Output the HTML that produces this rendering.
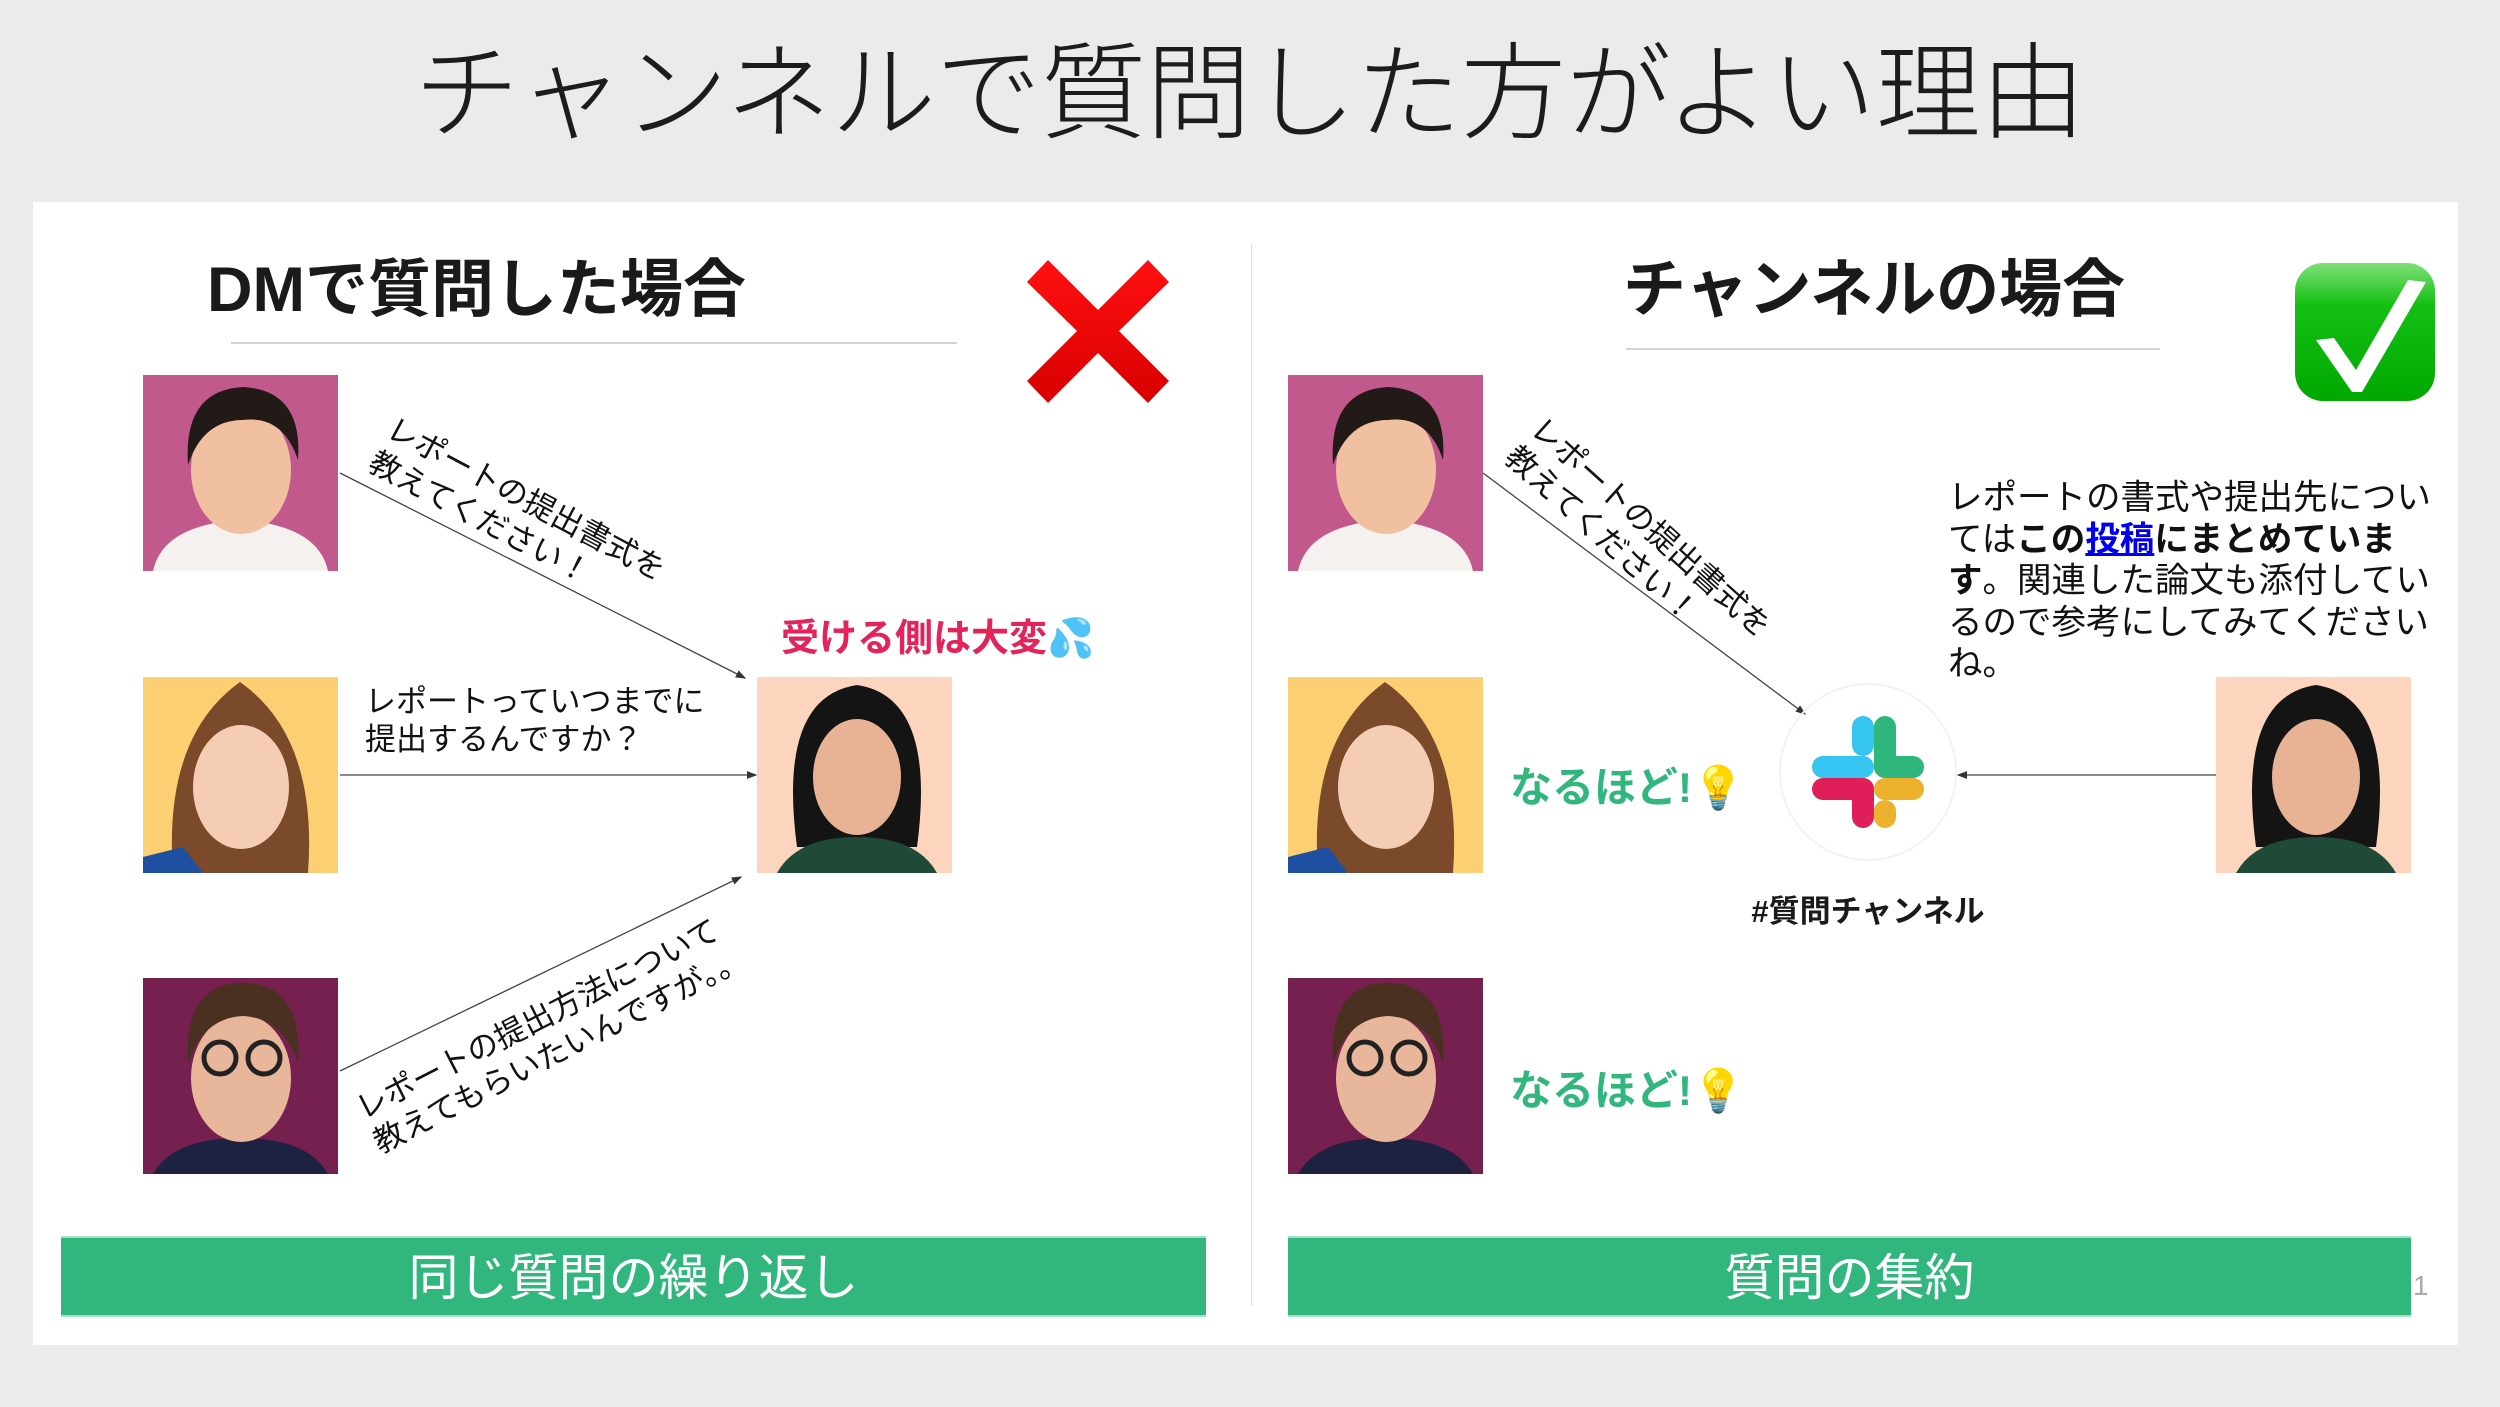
<!DOCTYPE html>
<html><head><meta charset="utf-8"><style>
*{margin:0;padding:0;box-sizing:border-box}
body{width:2500px;height:1407px;background:#ebebeb;position:relative;overflow:hidden;font-family:"Liberation Sans","Noto Sans CJK JP",sans-serif;color:#111}
.a{position:absolute;white-space:nowrap}
#panel{position:absolute;left:33px;top:202px;width:2425px;height:1143px;background:#fff}
.bar{position:absolute;top:1236px;height:81px;background:#31b77d;color:#fff;font-size:50px;line-height:81px;text-align:center;border-top:2px solid #a8e0c6;border-bottom:2px solid #a8e0c6}
.photo{position:absolute;width:195px;height:196px;overflow:hidden}
.rot{font-size:31px;line-height:38px;color:#111}
.naru{font-size:42px;font-weight:bold;color:#31b77d}
</style></head><body>
<div class="a" style="left:0;width:2500px;top:36px;text-align:center;font-size:105px;line-height:118px;font-weight:300;color:#1c1c1c">チャンネルで質問した方がよい理由</div>
<div id="panel"></div>
<div class="a" style="left:1251px;top:244px;width:1px;height:1062px;background:#ddd"></div>

<div class="a" style="left:207px;top:252px;font-size:63px;line-height:76px;font-weight:bold;color:#1a1a1a">DMで質問した場合</div>
<div class="a" style="left:231px;top:342px;width:726px;height:2px;background:#d4d4d4"></div>
<div class="a" style="left:1623px;top:252px;font-size:63px;line-height:76px;font-weight:bold;color:#1a1a1a">チャンネルの場合</div>
<div class="a" style="left:1626px;top:348px;width:534px;height:2px;background:#d4d4d4"></div>

<svg class="a" style="left:1027px;top:260px" width="142" height="143" viewBox="0 0 142 143">
<defs><linearGradient id="rg" x1="0" y1="0" x2="0" y2="1"><stop offset="0" stop-color="#ff1010"/><stop offset="1" stop-color="#d80000"/></linearGradient></defs>
<path d="M21 0 L71 50 L121 0 L142 22 L92 71 L142 121 L121 143 L71 93 L21 143 L0 121 L50 71 L0 22Z" fill="url(#rg)"/></svg>

<svg class="a" style="left:2294px;top:260px" width="142" height="143" viewBox="0 0 142 143">
<defs><linearGradient id="gg" x1="0" y1="0" x2="0" y2="1"><stop offset="0" stop-color="#7fe07a"/><stop offset="0.3" stop-color="#14c014"/><stop offset="1" stop-color="#00a800"/></linearGradient></defs>
<rect x="1" y="3" width="140" height="138" rx="28" fill="url(#gg)"/>
<path d="M22 88 L40 86 L62 118 L114 28 L132 30 L68 140 L58 140Z" fill="#fff" transform="translate(0,-8)"/></svg>

<svg class="photo" style="left:143px;top:375px" viewBox="0 0 195 196"><rect width="195" height="196" fill="#c2598d"/><path d="M10 196 Q20 150 97 145 Q175 150 185 196Z" fill="#f4f1ee"/><ellipse cx="98" cy="95" rx="50" ry="64" fill="#f0c0a0"/><path d="M45 90 Q40 15 100 12 Q160 15 155 85 Q140 40 100 45 Q60 45 45 90Z" fill="#221a16"/></svg>
<svg class="photo" style="left:143px;top:677px" viewBox="0 0 195 196"><rect width="195" height="196" fill="#fcd072"/><path d="M30 196 Q20 60 97 5 Q175 60 165 196Z" fill="#7a4a2a"/><ellipse cx="98" cy="110" rx="48" ry="62" fill="#f5cdb4"/><path d="M0 180 L40 170 L60 196 L0 196Z" fill="#1e4fa0"/></svg>
<svg class="photo" style="left:143px;top:978px" viewBox="0 0 195 196"><rect width="195" height="196" fill="#76204f"/><path d="M10 196 Q30 160 97 160 Q165 160 185 196Z" fill="#1d2240"/><ellipse cx="98" cy="100" rx="50" ry="64" fill="#e8b69a"/><path d="M45 85 Q40 5 100 5 Q160 5 155 85 Q140 40 100 38 Q60 40 45 85Z" fill="#4a3020"/><circle cx="77" cy="80" r="16" fill="none" stroke="#222" stroke-width="5"/><circle cx="121" cy="80" r="16" fill="none" stroke="#222" stroke-width="5"/></svg>
<svg class="photo" style="left:757px;top:677px" viewBox="0 0 195 196"><rect width="195" height="196" fill="#fdd5be"/><path d="M40 170 Q20 20 100 8 Q180 20 160 170Z" fill="#141414"/><ellipse cx="100" cy="100" rx="44" ry="58" fill="#e8b294"/><path d="M20 196 Q40 160 100 160 Q160 160 180 196Z" fill="#1f4a38"/></svg>

<svg class="photo" style="left:1288px;top:375px" viewBox="0 0 195 196"><rect width="195" height="196" fill="#c2598d"/><path d="M10 196 Q20 150 97 145 Q175 150 185 196Z" fill="#f4f1ee"/><ellipse cx="98" cy="95" rx="50" ry="64" fill="#f0c0a0"/><path d="M45 90 Q40 15 100 12 Q160 15 155 85 Q140 40 100 45 Q60 45 45 90Z" fill="#221a16"/></svg>
<svg class="photo" style="left:1288px;top:677px" viewBox="0 0 195 196"><rect width="195" height="196" fill="#fcd072"/><path d="M30 196 Q20 60 97 5 Q175 60 165 196Z" fill="#7a4a2a"/><ellipse cx="98" cy="110" rx="48" ry="62" fill="#f5cdb4"/><path d="M0 180 L40 170 L60 196 L0 196Z" fill="#1e4fa0"/></svg>
<svg class="photo" style="left:1288px;top:978px" viewBox="0 0 195 196"><rect width="195" height="196" fill="#76204f"/><path d="M10 196 Q30 160 97 160 Q165 160 185 196Z" fill="#1d2240"/><ellipse cx="98" cy="100" rx="50" ry="64" fill="#e8b69a"/><path d="M45 85 Q40 5 100 5 Q160 5 155 85 Q140 40 100 38 Q60 40 45 85Z" fill="#4a3020"/><circle cx="77" cy="80" r="16" fill="none" stroke="#222" stroke-width="5"/><circle cx="121" cy="80" r="16" fill="none" stroke="#222" stroke-width="5"/></svg>
<svg class="photo" style="left:2216px;top:677px" viewBox="0 0 195 196"><rect width="195" height="196" fill="#fdd5be"/><path d="M40 170 Q20 20 100 8 Q180 20 160 170Z" fill="#141414"/><ellipse cx="100" cy="100" rx="44" ry="58" fill="#e8b294"/><path d="M20 196 Q40 160 100 160 Q160 160 180 196Z" fill="#1f4a38"/></svg>

<svg class="a" style="left:0;top:0" width="2500" height="1407">
<defs><marker id="ar" markerWidth="8" markerHeight="8" refX="7" refY="4" orient="auto"><path d="M0 1 L8 4 L0 7Z" fill="#333"/></marker></defs>
<g stroke="#444" stroke-width="1.3" fill="none" marker-end="url(#ar)">
<line x1="340" y1="473" x2="745" y2="678"/>
<line x1="340" y1="775" x2="756" y2="775"/>
<line x1="340" y1="1071" x2="741" y2="877"/>
<line x1="1483" y1="473" x2="1805" y2="714"/>
<line x1="2216" y1="775" x2="1958" y2="775"/>
</g>
<circle cx="1868" cy="772" r="88" fill="none" stroke="#f2f2f2" stroke-width="2"/>
<g transform="translate(1812,716)">
<rect x="62" y="0" width="22" height="62" rx="11" fill="#2eb67d"/>
<rect x="62" y="40" width="50" height="22" rx="11" fill="#2eb67d"/>
<rect x="0" y="40" width="62" height="22" rx="11" fill="#36c5f0"/>
<rect x="40" y="0" width="22" height="40" rx="11" fill="#36c5f0"/>
<rect x="62" y="62" width="50" height="22" rx="11" fill="#ecb22e"/>
<rect x="62" y="84" width="22" height="28" rx="11" fill="#ecb22e"/>
<rect x="40" y="62" width="22" height="50" rx="11" fill="#e01e5a"/>
<rect x="0" y="62" width="62" height="22" rx="11" fill="#e01e5a"/>
</g>
</svg>

<div class="a rot" style="left:398px;top:410px;transform:rotate(28deg);transform-origin:0 0">レポートの提出書式を<br>教えてください！</div>
<div class="a rot" style="left:365px;top:683px;line-height:38px">レポートっていつまでに<br>提出するんですか？</div>
<div class="a rot" style="left:350px;top:1094px;transform:rotate(-27deg);transform-origin:0 0">レポートの提出方法について<br>教えてもらいたいんですが。。</div>
<div class="a rot" style="left:1548px;top:410px;transform:rotate(42deg);transform-origin:0 0">レポートの提出書式を<br>教えてください！</div>

<div class="a" style="left:781px;top:607px;font-size:38px;font-weight:bold;color:#e3245b">受ける側は大変<span style="color:#4aa8e0">💦</span></div>

<div class="a" style="left:1948px;top:478px;font-size:34.5px;line-height:41.5px;color:#111">レポートの書式や提出先につい<br>ては<b>この<a style="color:#0000ee;text-decoration:underline">投稿</a>にまとめていま</b><br><b>す</b>。関連した論文も添付してい<br>るので参考にしてみてください<br>ね。</div>

<div class="a naru" style="left:1510px;top:754px">なるほど!<span style="color:#f5c518;font-weight:normal">💡</span></div>
<div class="a naru" style="left:1510px;top:1057px">なるほど!<span style="color:#f5c518;font-weight:normal">💡</span></div>
<div class="a" style="left:1668px;top:886px;width:400px;text-align:center;font-size:31px;font-weight:bold;color:#1a1a1a">#質問チャンネル</div>

<div class="bar" style="left:61px;width:1145px">同じ質問の繰り返し</div>
<div class="bar" style="left:1288px;width:1123px">質問の集約</div>
<div class="a" style="left:2413px;top:1270px;font-size:28px;color:#aaa">1</div>
</body></html>
